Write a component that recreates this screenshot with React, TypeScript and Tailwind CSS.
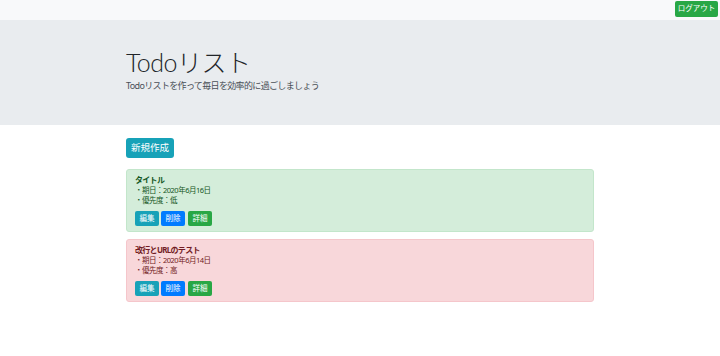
import React from "react";

type Todo = {
  id: number;
  title: string;
  due: string;
  priority: string;
  tone: "success" | "danger";
};

const todos: Todo[] = [
  { id: 1, title: "タイトル", due: "2020年6月16日", priority: "低", tone: "success" },
  { id: 2, title: "改行とURLのテスト", due: "2020年6月14日", priority: "高", tone: "danger" },
];

const font = { fontFamily: '"Noto Sans", "Noto Sans CJK JP", sans-serif' };

function TodoCard({ todo }: { todo: Todo }) {
  const box =
    todo.tone === "success"
      ? "bg-[#d4edda] border-[#c3e6cb] text-[#155724]"
      : "bg-[#f8d7da] border-[#f5c6cb] text-[#721c24]";

  return (
    <div className={`h-[63px] rounded-[3px] border ${box} px-[8px] pt-[4px]`}>
      <p className="text-[8px] font-bold leading-[11px] tracking-[-0.7px]">{todo.title}</p>
      <p className="text-[7.5px] leading-[10px] tracking-[-0.5px]">・期日：{todo.due}</p>
      <p className="text-[7.5px] leading-[10px] tracking-[-0.5px]">・優先度：{todo.priority}</p>

      {/* ボタン */}
      <div className="mt-[6px] flex gap-[2px]">
        <button className="h-[15px] w-[24px] rounded-[2px] bg-[#17a2b8] text-[7.5px] text-white">
          編集
        </button>
        <button className="h-[15px] w-[24px] rounded-[2px] bg-[#007bff] text-[7.5px] text-white">
          削除
        </button>
        <button className="ml-[1px] h-[15px] w-[24px] rounded-[2px] bg-[#28a745] text-[7.5px] text-white">
          詳細
        </button>
      </div>
    </div>
  );
}

export default function App() {
  return (
    <div className="min-h-[356px] bg-white text-[#212529]" style={font}>
      {/* ナビバー */}
      <nav className="flex h-[20px] items-center justify-end bg-[#f8f9fa] pr-[2px]">
        <button className="-mt-[2px] h-[16px] w-[43px] rounded-[2px] bg-[#28a745] text-[7.5px] text-white">
          ログアウト
        </button>
      </nav>

      {/* ジャンボトロン */}
      <header className="h-[105px] bg-[#e9ecef]">
        <div className="mx-auto w-[468px] pt-[26px]">
          <h1
            className="text-[25px] font-light leading-[32px] tracking-[-0.5px]"
            style={{ fontFamily: '"Lato", "Noto Sans CJK JP", sans-serif' }}
          >
            Todoリスト
          </h1>
          <p className="mt-[2px] text-[9px] leading-[12px] tracking-[-0.65px] text-[#495057]">
            Todoリストを作って毎日を効率的に過ごしましょう
          </p>
        </div>
      </header>

      <main className="mx-auto w-[468px] pt-[13px]">
        <button className="block h-[20px] w-[48px] rounded-[3px] bg-[#17a2b8] text-[9.5px] text-white">
          新規作成
        </button>

        <div className="mt-[11px] flex flex-col gap-[7px]">
          {todos.map((t) => (
            <TodoCard key={t.id} todo={t} />
          ))}
        </div>
      </main>
    </div>
  );
}
